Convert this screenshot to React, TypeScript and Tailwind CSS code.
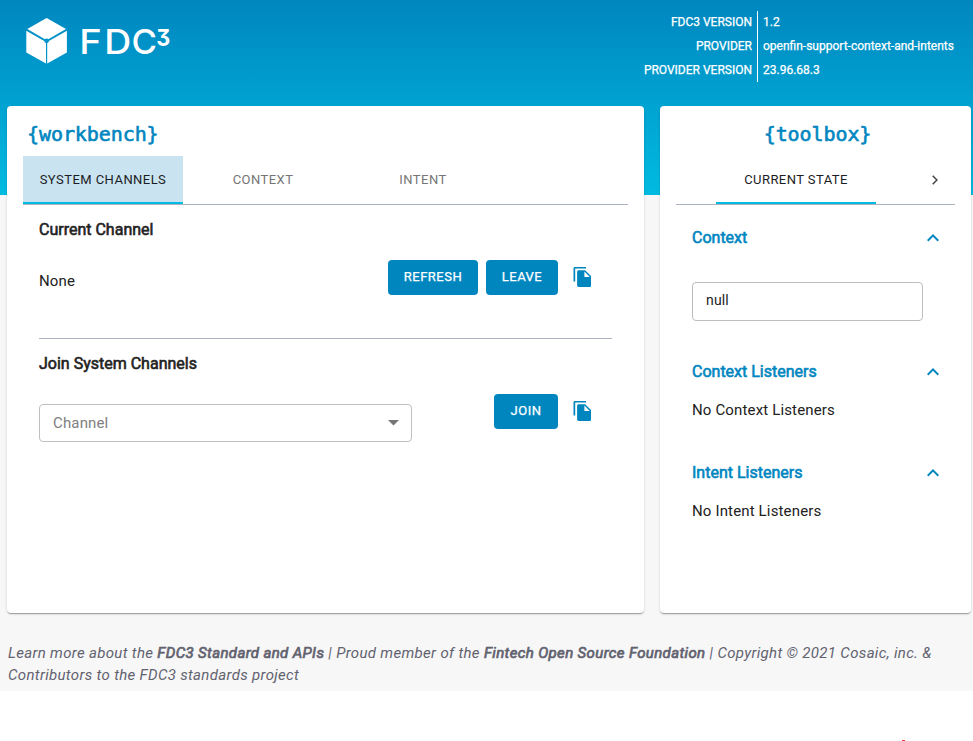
import { ReactNode } from "react";

const cardClass =
  "flex h-[507px] flex-col rounded-[4px] bg-white px-4 shadow-[0_2px_1px_-1px_rgba(0,0,0,0.2),0_1px_1px_0_rgba(0,0,0,0.14),0_1px_3px_0_rgba(0,0,0,0.12)]";

function Logo() {
  return (
    <svg width="180" height="60" viewBox="0 0 180 60" className="block" fill="#fff" fontFamily="Inter, sans-serif">
      <path d="M46.6 10 L66 21 L46.6 32.2 L27.3 21 Z" />
      <path d="M26.3 22.8 L46 34 V55.6 L26.3 44.6 Z" />
      <path d="M66.9 22.8 L47.2 34 V55.6 L66.9 44.6 Z" />
      <circle cx="46.6" cy="32.8" r="2.4" fill="#0094c8" />
      <text x="79.2" y="45.7" fontSize="34" fontWeight="500" textLength="22.5" lengthAdjust="spacingAndGlyphs">F</text>
      <text x="104.3" y="45.7" fontSize="34" fontWeight="500" textLength="27" lengthAdjust="spacingAndGlyphs">D</text>
      <text x="131.4" y="45.7" fontSize="34" fontWeight="500" textLength="25.5" lengthAdjust="spacingAndGlyphs">C</text>
      <text
        x="156.2"
        y="37.5"
        fontSize="23"
        fontWeight="700"
        textLength="14"
        lengthAdjust="spacingAndGlyphs"
        className="[font-feature-settings:'cv09']"
      >
        3
      </text>
    </svg>
  );
}

function CopyIcon() {
  return (
    <svg width="18" height="20" viewBox="0 0 18 20" className="block" fill="#0086bf">
      <path d="M13 0H2.100C1.200 0 .5.7.5 1.6V14.500h1.700V1.6H13V0Z" />
      <path d="M12.100 3.3H5.7c-.9 0-1.6.7-1.6 1.6v13.4c0 .9.7 1.7 1.6 1.7h11.2c.9 0 1.6-.8 1.6-1.7V9.6l-6.4-6.3ZM11.4 9.9V4.6l5.4 5.3h-5.4Z" />
    </svg>
  );
}

function Chevron() {
  return (
    <svg width="12" height="8" viewBox="0 0 12 8" className="block" fill="#0086bf">
      <path d="M1.41 7.41 6 2.83l4.59 4.58L12 6 6 0 0 6Z" />
    </svg>
  );
}

function Button({ children, className }: { children: ReactNode; className: string }) {
  return (
    <button
      className={`h-[35px] rounded-[4px] bg-[#0086bf] pb-[2px] text-[13px] tracking-[0.5px] text-white [-webkit-text-stroke:0.25px_#fff] ${className}`}
    >
      {children}
    </button>
  );
}

function Tab({ children, active, tint }: { children: ReactNode; active?: boolean; tint?: boolean }) {
  return (
    <div
      className={`flex h-12 w-40 items-center justify-center text-[13px] tracking-[0.45px] ${
        active ? "border-b-2 border-[#00bbe1] pt-[2px] text-[#1c1c24]" : "text-[#757575]"
      } ${tint ? "bg-[#c9e4f0]" : ""}`}
    >
      {children}
    </div>
  );
}

function SectionHead({ children }: { children: ReactNode }) {
  return (
    <div className="flex items-center justify-between text-[#0086bf]">
      <h3 className="text-base leading-6 font-normal tracking-normal [-webkit-text-stroke:0.6px_currentColor]">{children}</h3>
      <Chevron />
    </div>
  );
}

const titleClass =
  "h-[50px] pt-[15px] font-['DejaVu_Sans_Mono',monospace] text-[20px] leading-[26px] tracking-[-0.08px] text-[#0086bf] [-webkit-text-stroke:0.6px_#0086bf]";

const headingClass = "text-base leading-6 font-normal text-[#222] [-webkit-text-stroke:0.6px_#222]";

function FooterLink({ children }: { children: ReactNode }) {
  return <a className="tracking-[0.36px] [-webkit-text-stroke:0.7px_currentColor]">{children}</a>;
}

export default function App() {
  return (
    <div className="h-[741px] w-[973px] overflow-hidden bg-white font-[Roboto,sans-serif] text-[#212121]">
      <div className="h-[691px] bg-[#f7f7f7] bg-[linear-gradient(#0086bf,#00bbe1)] bg-[length:100%_195px] bg-no-repeat">
        <header className="flex h-[106px] items-start justify-between">
          <div className="pt-2">
            <Logo />
          </div>
          <div className="mt-[11px] flex text-[12px] leading-6 text-white [-webkit-text-stroke:0.25px_#fff]">
            <div className="h-[71px] border-r border-white pr-[5px] text-right leading-6">
              <div className="-mt-px">FDC3 VERSION</div>
              <div>PROVIDER</div>
              <div>PROVIDER VERSION</div>
            </div>
            <div className="-mt-px w-[215px] pl-[5px]">
              <div>1.2</div>
              <div>openfin-support-context-and-intents</div>
              <div>23.96.68.3</div>
            </div>
          </div>
        </header>

        <main className="flex gap-4 pl-[7px]">
          <section className={`${cardClass} w-[637px]`}>
            <h2 className={`${titleClass} pl-1`}>{"{workbench}"}</h2>
            <nav className="flex border-b border-[#acb2c0]">
              <Tab active tint>SYSTEM CHANNELS</Tab>
              <Tab>CONTEXT</Tab>
              <Tab>INTENT</Tab>
            </nav>
            <div className="px-4">
              <div className="h-[134px] border-b border-[#acb2c0] pt-[13px]">
                <h3 className={headingClass}>Current Channel</h3>
                <div className="mt-[18px] flex items-start justify-between pr-[21px]">
                  <p className="pt-[9px] text-[15px] leading-6 tracking-[0.15px]">None</p>
                  <div className="-mr-px flex">
                    <Button className="w-[90px]">REFRESH</Button>
                    <Button className="ml-2 w-[72px]">LEAVE</Button>
                    <div className="mr-[1px] ml-[15px] pt-[7px]">
                      <CopyIcon />
                    </div>
                  </div>
                </div>
              </div>
              <div className="pt-[13px]">
                <h3 className={headingClass}>Join System Channels</h3>
                <div className="mt-[18px] flex items-start justify-between pr-[21px]">
                  <div className="mt-[10px] flex h-[38px] w-[373px] items-center justify-between rounded-[4px] border border-[#c0c0c0] pr-3 pl-[13px]">
                    <span className="text-[15px] tracking-[0.15px] text-[#808080]">Channel</span>
                    <svg width="11" height="6" viewBox="0 0 11 6" fill="#757575">
                      <path d="M0 0h11L5.500 5.500Z" />
                    </svg>
                  </div>
                  <div className="-mr-px flex">
                    <Button className="w-16">JOIN</Button>
                    <div className="mr-[1px] ml-[15px] pt-[7px]">
                      <CopyIcon />
                    </div>
                  </div>
                </div>
              </div>
            </div>
          </section>

          <section className={`${cardClass} w-[311px]`}>
            <h2 className={`${titleClass} pl-1 text-center`}>{"{toolbox}"}</h2>
            <nav className="flex items-center justify-between border-b border-[#acb2c0] pr-[17px] pl-10">
              <Tab active>CURRENT STATE</Tab>
              <svg width="6" height="10" viewBox="0 0 6 10" className="block" fill="none" stroke="#444" strokeWidth="1.5">
                <path d="m.7.8 4.200 4.200-4.200 4.200" />
              </svg>
            </nav>
            <div className="px-4 text-[15px] leading-6 tracking-[0.15px]">
              <div className="pt-[21px]">
                <SectionHead>Context</SectionHead>
              </div>
              <div className="mt-[32px] h-[39px] w-[231px] rounded-[4px] border border-[#bdbdbd] pt-[5px] pl-[13px] text-[14px]">
                null
              </div>
              <div className="pt-[39px]">
                <SectionHead>Context Listeners</SectionHead>
              </div>
              <p className="pt-[14px]">No Context Listeners</p>
              <div className="pt-[39px]">
                <SectionHead>Intent Listeners</SectionHead>
              </div>
              <p className="pt-[14px]">No Intent Listeners</p>
            </div>
          </section>
        </main>

        <footer className="pt-[29px] pl-2 text-[15px] leading-[22px] tracking-[0.33px] whitespace-nowrap text-[#62626f] italic">
          <p>
            Learn more about the <FooterLink>FDC3 Standard and APIs</FooterLink> | Proud member of the{" "}
            <FooterLink>Fintech Open Source Foundation</FooterLink> | Copyright © 2021 Cosaic, inc. &amp;
          </p>
          <p>Contributors to the FDC3 standards project</p>
        </footer>
      </div>
      <div className="mt-[49px] ml-[902px] h-px w-[3px] bg-[#ff4040]" />
    </div>
  );
}
